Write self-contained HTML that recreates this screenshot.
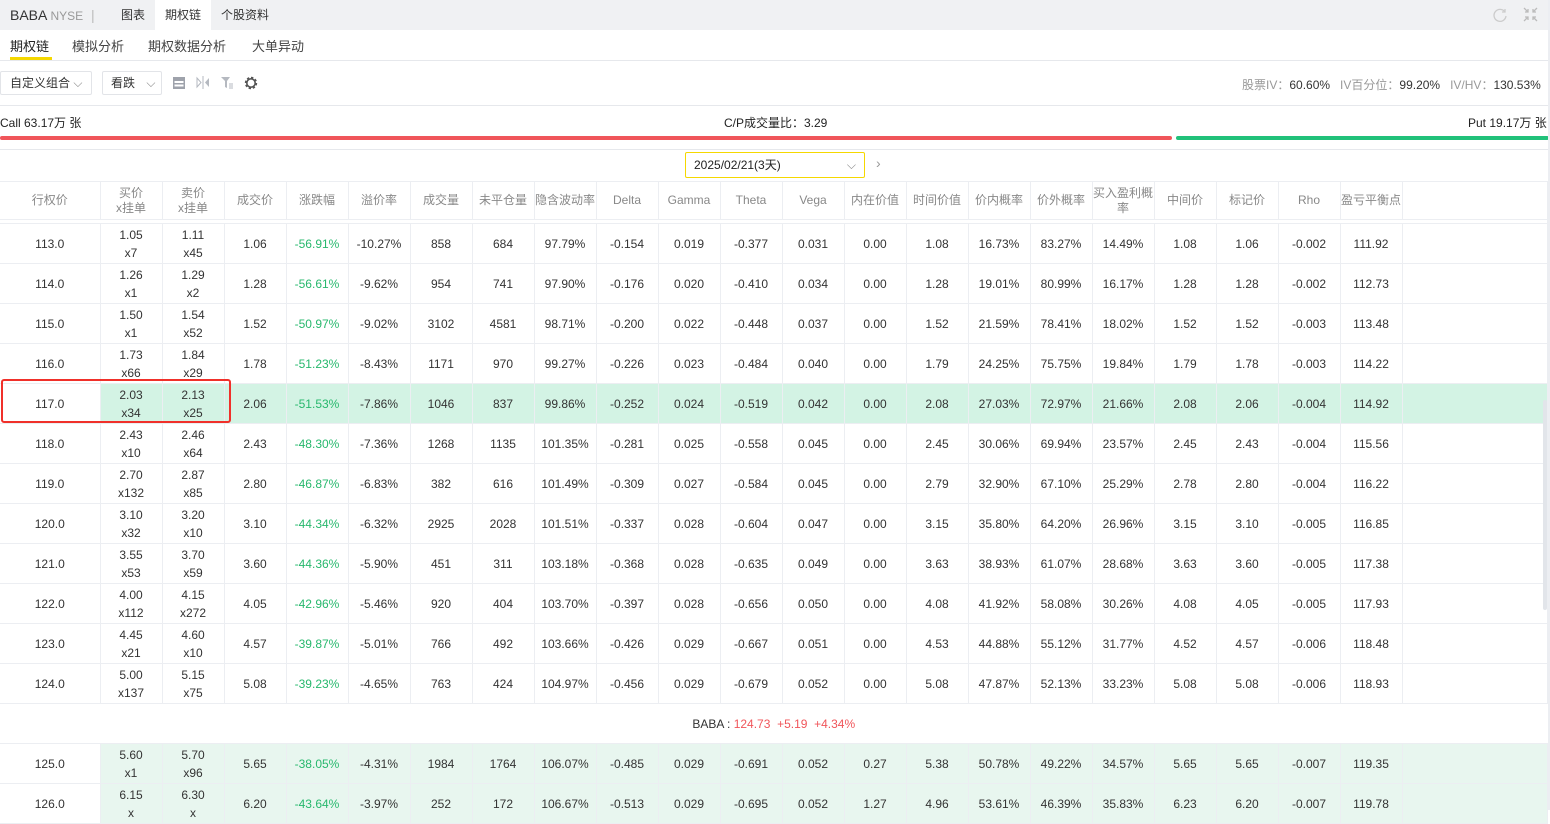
<!DOCTYPE html>
<html><head><meta charset="utf-8">
<style>
*{margin:0;padding:0;box-sizing:border-box}
body{width:1550px;height:810px;overflow:hidden;background:#fff;font-family:"Liberation Sans","Noto Sans CJK SC",sans-serif;color:#333;font-size:12px;position:relative}
.abs{position:absolute}
.top{left:0;top:0;width:1550px;height:30px;background:#f0f1f3}
.tab{top:0;height:30px;line-height:30px;font-size:12px;color:#333}
table{position:absolute;left:0;border-collapse:collapse;table-layout:fixed}
td{height:40px;text-align:center;border-right:1px solid #eceef2;border-bottom:1px solid #eceef2;font-size:12px;line-height:18px;color:#333}
thead td{height:38px;color:#888;line-height:15px}
td.g{color:#27b86d}
tr.hl td{background:#d3f3e4}
tr.hl td:first-child{background:#fff}
tr.lg td{background:#e8f6ef}
tr.lg td:first-child{background:#fff}
</style></head><body>
<div class="abs top"></div>
<div class="abs tab" style="left:10px;font-size:14px;">BABA <span style="color:#999;font-size:12px">NYSE</span> <span style="color:#bbb;margin-left:4px">|</span></div>
<div class="abs tab" style="left:121px">图表</div>
<div class="abs" style="left:155px;top:0;width:56px;height:30px;background:#fff"></div>
<div class="abs tab" style="left:165px">期权链</div>
<div class="abs tab" style="left:221px">个股资料</div>
<svg class="abs" style="left:1492px;top:7px" width="16" height="16" viewBox="0 0 16 16"><path d="M13 5A6 6 0 1 0 14 9" fill="none" stroke="#ccc" stroke-width="1.3"/><path d="M13 2v3h-3" fill="none" stroke="#ccc" stroke-width="1.3"/></svg>
<svg class="abs" style="left:1523px;top:7px" width="15" height="15" viewBox="0 0 15 15" stroke="#bbb" stroke-width="1.3" fill="none"><path d="M1 1l4 4M5 2v3H2M14 1l-4 4M10 2v3h3M1 14l4-4M5 13v-3H2M14 14l-4-4M10 13v-3h3"/></svg>
<div class="abs" style="left:10px;top:36px;font-size:13px;color:#222">期权链</div>
<div class="abs" style="left:10px;top:57px;width:42px;height:3px;background:#f5d800"></div>
<div class="abs" style="left:72px;top:36px;font-size:13px;color:#444">模拟分析</div>
<div class="abs" style="left:148px;top:36px;font-size:13px;color:#444">期权数据分析</div>
<div class="abs" style="left:252px;top:36px;font-size:13px;color:#444">大单异动</div>
<div class="abs" style="left:0;top:60px;width:1550px;height:1px;background:#e6e8ec"></div>
<div class="abs" style="left:0;top:71px;width:92px;height:24px;border:1px solid #e2e4e8;border-radius:2px;line-height:22px;padding-left:9px;font-size:12px">自定义组合 <span style="color:#888">⌵</span></div>
<div class="abs" style="left:102px;top:71px;width:60px;height:24px;border:1px solid #e2e4e8;border-radius:2px;line-height:22px;padding-left:8px;font-size:12px">看跌 <span style="color:#888;margin-left:8px">⌵</span></div>
<svg class="abs" style="left:173px;top:77px" width="12" height="12"><rect x="0" y="0" width="12" height="12" fill="#9ea2ab"/><rect x="1.5" y="4" width="9" height="2" fill="#fff"/><rect x="1.5" y="7.5" width="9" height="2" fill="#fff"/></svg>
<svg class="abs" style="left:196px;top:76px" width="14" height="13"><path d="M1 2l4 4.5L1 11z" fill="none" stroke="#b5b9c0"/><path d="M7 0v13" stroke="#b5b9c0"/><path d="M13 2l-4 4.5 4 4.5z" fill="#b5b9c0"/></svg>
<svg class="abs" style="left:221px;top:76px" width="13" height="13"><path d="M0 1h9L6 5v7L4 11V5z" fill="#b5b9c0"/><path d="M8 8h4M8 10h4M8 12h4" stroke="#b5b9c0"/></svg>
<svg class="abs" style="left:244px;top:76px" width="14" height="14" viewBox="0 0 14 14"><circle cx="7" cy="7" r="5" fill="none" stroke="#555" stroke-width="2.4" stroke-dasharray="2.2 1.7"/><circle cx="7" cy="7" r="4.2" fill="none" stroke="#555" stroke-width="1.6"/></svg>
<div class="abs" style="left:1242px;top:76px;font-size:12px;color:#999">股票IV：<span style="color:#333">60.60%</span>&nbsp;&nbsp; IV百分位：<span style="color:#333">99.20%</span>&nbsp;&nbsp; IV/HV：<span style="color:#333">130.53%</span></div>
<div class="abs" style="left:0;top:105px;width:1550px;height:1px;background:#e6e8ec"></div>
<div class="abs" style="left:0;top:114px;font-size:12px;color:#222">Call 63.17万 张</div>
<div class="abs" style="left:724px;top:114px;font-size:12px;color:#222">C/P成交量比：3.29</div>
<div class="abs" style="left:1468px;top:114px;font-size:12px;color:#222">Put 19.17万 张</div>
<div class="abs" style="left:0;top:136px;width:1172px;height:4px;background:#f0555a;border-radius:2px"></div>
<div class="abs" style="left:1176px;top:136px;width:373px;height:4px;background:#21c17a;border-radius:2px"></div>
<div class="abs" style="left:0;top:149px;width:1550px;height:1px;background:#e6e8ec"></div>
<div class="abs" style="left:685px;top:152px;width:180px;height:26px;border:1px solid #f5d800;border-radius:2px;line-height:24px;padding-left:8px;font-size:12px;color:#222">2025/02/21(3天)<span class="abs" style="right:8px;color:#888">⌵</span></div>
<div class="abs" style="left:876px;top:155px;color:#999;font-size:14px">›</div>
<table style="top:181px;width:1548px">
<colgroup><col style="width:100px"><col span="21" style="width:62px"><col></colgroup>
<thead><tr style="border-top:1px solid #eceef2"><td>行权价</td><td>买价<br>x挂单</td><td>卖价<br>x挂单</td><td>成交价</td><td>涨跌幅</td><td>溢价率</td><td>成交量</td><td>未平仓量</td><td>隐含波动率</td><td>Delta</td><td>Gamma</td><td>Theta</td><td>Vega</td><td>内在价值</td><td>时间价值</td><td>价内概率</td><td>价外概率</td><td>买入盈利概率</td><td>中间价</td><td>标记价</td><td>Rho</td><td>盈亏平衡点</td><td></td></tr>
<tr><td style="height:4px" colspan="23"></td></tr></thead>
<tbody>
<tr><td>113.0</td><td>1.05<br>x7</td><td>1.11<br>x45</td><td>1.06</td><td class="g">-56.91%</td><td>-10.27%</td><td>858</td><td>684</td><td>97.79%</td><td>-0.154</td><td>0.019</td><td>-0.377</td><td>0.031</td><td>0.00</td><td>1.08</td><td>16.73%</td><td>83.27%</td><td>14.49%</td><td>1.08</td><td>1.06</td><td>-0.002</td><td>111.92</td><td></td></tr>
<tr><td>114.0</td><td>1.26<br>x1</td><td>1.29<br>x2</td><td>1.28</td><td class="g">-56.61%</td><td>-9.62%</td><td>954</td><td>741</td><td>97.90%</td><td>-0.176</td><td>0.020</td><td>-0.410</td><td>0.034</td><td>0.00</td><td>1.28</td><td>19.01%</td><td>80.99%</td><td>16.17%</td><td>1.28</td><td>1.28</td><td>-0.002</td><td>112.73</td><td></td></tr>
<tr><td>115.0</td><td>1.50<br>x1</td><td>1.54<br>x52</td><td>1.52</td><td class="g">-50.97%</td><td>-9.02%</td><td>3102</td><td>4581</td><td>98.71%</td><td>-0.200</td><td>0.022</td><td>-0.448</td><td>0.037</td><td>0.00</td><td>1.52</td><td>21.59%</td><td>78.41%</td><td>18.02%</td><td>1.52</td><td>1.52</td><td>-0.003</td><td>113.48</td><td></td></tr>
<tr><td>116.0</td><td>1.73<br>x66</td><td>1.84<br>x29</td><td>1.78</td><td class="g">-51.23%</td><td>-8.43%</td><td>1171</td><td>970</td><td>99.27%</td><td>-0.226</td><td>0.023</td><td>-0.484</td><td>0.040</td><td>0.00</td><td>1.79</td><td>24.25%</td><td>75.75%</td><td>19.84%</td><td>1.79</td><td>1.78</td><td>-0.003</td><td>114.22</td><td></td></tr>
<tr class="hl"><td>117.0</td><td>2.03<br>x34</td><td>2.13<br>x25</td><td>2.06</td><td class="g">-51.53%</td><td>-7.86%</td><td>1046</td><td>837</td><td>99.86%</td><td>-0.252</td><td>0.024</td><td>-0.519</td><td>0.042</td><td>0.00</td><td>2.08</td><td>27.03%</td><td>72.97%</td><td>21.66%</td><td>2.08</td><td>2.06</td><td>-0.004</td><td>114.92</td><td></td></tr>
<tr><td>118.0</td><td>2.43<br>x10</td><td>2.46<br>x64</td><td>2.43</td><td class="g">-48.30%</td><td>-7.36%</td><td>1268</td><td>1135</td><td>101.35%</td><td>-0.281</td><td>0.025</td><td>-0.558</td><td>0.045</td><td>0.00</td><td>2.45</td><td>30.06%</td><td>69.94%</td><td>23.57%</td><td>2.45</td><td>2.43</td><td>-0.004</td><td>115.56</td><td></td></tr>
<tr><td>119.0</td><td>2.70<br>x132</td><td>2.87<br>x85</td><td>2.80</td><td class="g">-46.87%</td><td>-6.83%</td><td>382</td><td>616</td><td>101.49%</td><td>-0.309</td><td>0.027</td><td>-0.584</td><td>0.045</td><td>0.00</td><td>2.79</td><td>32.90%</td><td>67.10%</td><td>25.29%</td><td>2.78</td><td>2.80</td><td>-0.004</td><td>116.22</td><td></td></tr>
<tr><td>120.0</td><td>3.10<br>x32</td><td>3.20<br>x10</td><td>3.10</td><td class="g">-44.34%</td><td>-6.32%</td><td>2925</td><td>2028</td><td>101.51%</td><td>-0.337</td><td>0.028</td><td>-0.604</td><td>0.047</td><td>0.00</td><td>3.15</td><td>35.80%</td><td>64.20%</td><td>26.96%</td><td>3.15</td><td>3.10</td><td>-0.005</td><td>116.85</td><td></td></tr>
<tr><td>121.0</td><td>3.55<br>x53</td><td>3.70<br>x59</td><td>3.60</td><td class="g">-44.36%</td><td>-5.90%</td><td>451</td><td>311</td><td>103.18%</td><td>-0.368</td><td>0.028</td><td>-0.635</td><td>0.049</td><td>0.00</td><td>3.63</td><td>38.93%</td><td>61.07%</td><td>28.68%</td><td>3.63</td><td>3.60</td><td>-0.005</td><td>117.38</td><td></td></tr>
<tr><td>122.0</td><td>4.00<br>x112</td><td>4.15<br>x272</td><td>4.05</td><td class="g">-42.96%</td><td>-5.46%</td><td>920</td><td>404</td><td>103.70%</td><td>-0.397</td><td>0.028</td><td>-0.656</td><td>0.050</td><td>0.00</td><td>4.08</td><td>41.92%</td><td>58.08%</td><td>30.26%</td><td>4.08</td><td>4.05</td><td>-0.005</td><td>117.93</td><td></td></tr>
<tr><td>123.0</td><td>4.45<br>x21</td><td>4.60<br>x10</td><td>4.57</td><td class="g">-39.87%</td><td>-5.01%</td><td>766</td><td>492</td><td>103.66%</td><td>-0.426</td><td>0.029</td><td>-0.667</td><td>0.051</td><td>0.00</td><td>4.53</td><td>44.88%</td><td>55.12%</td><td>31.77%</td><td>4.52</td><td>4.57</td><td>-0.006</td><td>118.48</td><td></td></tr>
<tr><td>124.0</td><td>5.00<br>x137</td><td>5.15<br>x75</td><td>5.08</td><td class="g">-39.23%</td><td>-4.65%</td><td>763</td><td>424</td><td>104.97%</td><td>-0.456</td><td>0.029</td><td>-0.679</td><td>0.052</td><td>0.00</td><td>5.08</td><td>47.87%</td><td>52.13%</td><td>33.23%</td><td>5.08</td><td>5.08</td><td>-0.006</td><td>118.93</td><td></td></tr>
<tr><td colspan="23" style="border-right:none">BABA : <span style="color:#f0555a">124.73 &nbsp;+5.19 &nbsp;+4.34%</span></td></tr>
<tr class="lg"><td>125.0</td><td>5.60<br>x1</td><td>5.70<br>x96</td><td>5.65</td><td class="g">-38.05%</td><td>-4.31%</td><td>1984</td><td>1764</td><td>106.07%</td><td>-0.485</td><td>0.029</td><td>-0.691</td><td>0.052</td><td>0.27</td><td>5.38</td><td>50.78%</td><td>49.22%</td><td>34.57%</td><td>5.65</td><td>5.65</td><td>-0.007</td><td>119.35</td><td></td></tr>
<tr class="lg"><td>126.0</td><td>6.15<br>x</td><td>6.30<br>x</td><td>6.20</td><td class="g">-43.64%</td><td>-3.97%</td><td>252</td><td>172</td><td>106.67%</td><td>-0.513</td><td>0.029</td><td>-0.695</td><td>0.052</td><td>1.27</td><td>4.96</td><td>53.61%</td><td>46.39%</td><td>35.83%</td><td>6.23</td><td>6.20</td><td>-0.007</td><td>119.78</td><td></td></tr>
</tbody></table>
<div class="abs" style="left:1,px;top:379px;left:1px;width:230px;height:44px;border:2px solid #f0302a;border-radius:3px"></div>
<div class="abs" style="left:1543px;top:400px;width:4px;height:210px;background:#e2e5ea;border-radius:2px"></div>
<div class="abs" style="left:1548px;top:0;width:2px;height:810px;background:#eceef2"></div>
</body></html>
